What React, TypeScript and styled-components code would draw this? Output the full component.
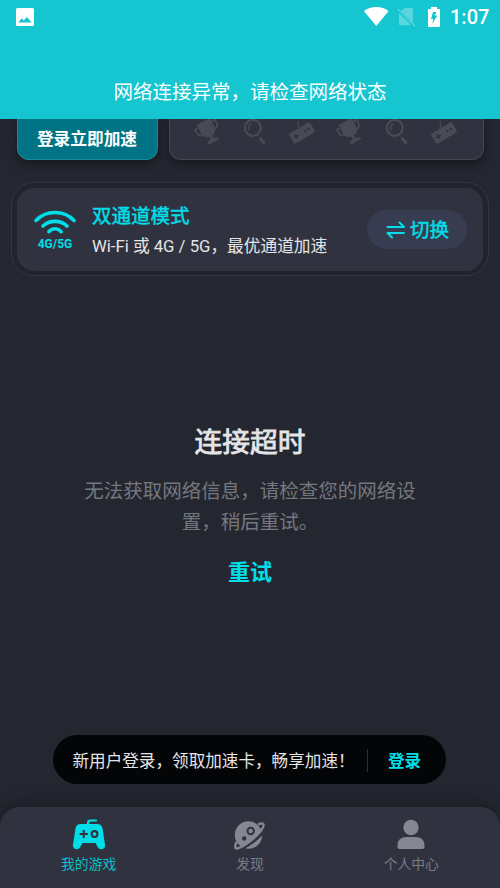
import React from "react";
import styled, { createGlobalStyle } from "styled-components";

const Global = createGlobalStyle`
  * { box-sizing: border-box; }
  body { margin: 0; background: #242730; }
  button { font: inherit; border: 0; padding: 0; background: none; }
`;

const Screen = styled.div`
  width: 500px;
  height: 888px;
  overflow: hidden;
  display: flex;
  flex-direction: column;
  background: #242730;
  color: #e5e5e7;
  font-family: Roboto, "Noto Sans CJK SC", sans-serif;
  white-space: nowrap;
`;

const Banner = styled.header`
  height: 119px;
  flex: none;
  display: flex;
  flex-direction: column;
  background: #15c5cf;
  color: #fff;
  z-index: 1;
`;

const StatusBar = styled.div`
  height: 34px;
  padding: 0 11px 0 16px;
  display: flex;
  align-items: center;
  justify-content: space-between;
`;

const StatusIcons = styled.div`
  display: flex;
  align-items: center;
`;

const Clock = styled.span`
  width: 39px;
  font-size: 20px;
  line-height: 34px;
  font-weight: 500;
`;

const BannerText = styled.div`
  margin-top: 44px;
  font-size: 19.5px;
  line-height: 30px;
  text-align: center;
`;

const TopRow = styled.div`
  height: 41px;
  flex: none;
  display: flex;
  gap: 11px;
  padding: 0 16.5px;
`;

const LoginTile = styled.button`
  width: 141px;
  border: 1px solid #208895;
  border-top: 0;
  border-radius: 0 0 12px 12px;
  background: #007484;
  box-shadow: 0 4px 8px #171820;
  color: #fff;
  font-size: 16.7px;
  line-height: 39px;
  font-weight: 700;
`;

const IconTile = styled.div`
  flex: 1;
  display: flex;
  padding-left: 23.5px;
  gap: 17.2px;
  border: 1px solid #454753;
  border-top: 0;
  border-radius: 0 0 12px 12px;
  background: #30333f;
  box-shadow: 0 4px 8px #171820;
  color: #484a56;

  svg { flex: none; }
`;

const ModeFrame = styled.section`
  flex: none;
  margin: 22px 11px 0;
  height: 94px;
  padding: 5px 4px;
  border: 1.5px solid #343640;
  border-radius: 23px;
  background: #22232d;
`;

const ModeCard = styled.div`
  height: 83px;
  margin: 0 1px;
  padding: 0 16px 0 17px;
  display: flex;
  align-items: center;
  border-radius: 17px;
  background: #30333f;
`;

const Signal = styled.div`
  width: 42px;
  padding-top: 2px;
  display: flex;
  flex-direction: column;
  align-items: center;
  color: #00dfe9;
`;

const SignalLabel = styled.span`
  margin-top: 2px;
  font-size: 12px;
  line-height: 14px;
  font-weight: 700;
`;

const ModeText = styled.div`
  flex: 1;
  padding: 5px 0 0 16px;
`;

const ModeTitle = styled.div`
  color: #00dfe9;
  font-size: 19.5px;
  line-height: 30px;
  -webkit-text-stroke: 0.45px currentColor;
`;

const ModeDetail = styled.div`
  font-size: 16.7px;
  line-height: 30px;
`;

const SwitchButton = styled.button`
  width: 100px;
  height: 39px;
  display: flex;
  align-items: center;
  justify-content: center;
  gap: 5px;
  padding-left: 1px;
  border-radius: 20px;
  background: #383c50;
  color: #00dfe9;
  font-size: 19.5px;
  -webkit-text-stroke: 0.45px currentColor;

  span { margin-top: -2px; }
`;

const ErrorPanel = styled.main`
  flex: 1;
  padding-top: 146px;
  display: flex;
  flex-direction: column;
  align-items: center;
`;

const ErrorTitle = styled.h1`
  margin: 0;
  font-size: 27.7px;
  line-height: 42px;
  font-weight: 400;
  -webkit-text-stroke: 0.8px currentColor;
`;

const ErrorDetail = styled.p`
  width: 334px;
  margin: 12px 0 0;
  color: #76777e;
  font-size: 19.5px;
  line-height: 31px;
  text-align: center;
  white-space: normal;
`;

const Retry = styled.button`
  margin-top: 18px;
  color: #00dfe9;
  font-size: 22px;
  line-height: 34px;
  font-weight: 700;
`;

const LoginPrompt = styled.aside`
  flex: none;
  width: 393px;
  height: 49px;
  margin: 0 0 23px 53px;
  padding: 1px 0 0 19.5px;
  display: flex;
  align-items: center;
  border-radius: 25px;
  background: #040507;
  font-size: 16.6px;
`;

const PromptText = styled.span`
  width: 294.5px;
`;

const PromptLogin = styled.button`
  padding: 2px 0 0 20px;
  border-left: 1px solid #303136;
  color: #00dfe9;
  line-height: 21px;
  font-weight: 700;
`;

const Tabs = styled.nav`
  flex: none;
  height: 81px;
  display: grid;
  grid-template-columns: repeat(3, 1fr);
  padding: 0 8px;
  border-top: 1px solid #343743;
  border-radius: 20px 20px 0 0;
  background: #30333f;
  box-shadow: 0 -3px 13px #1b1c24;
`;

const Tab = styled.button<{ $active?: boolean }>`
  display: flex;
  flex-direction: column;
  align-items: center;
  padding-top: 10px;
  color: ${({ $active }) => ($active ? "#00dfe9" : "#858891")};
  font-size: 13.8px;
  line-height: 20px;
`;

const TabLabel = styled.span<{ $active?: boolean }>`
  margin-top: 4px;
  color: ${({ $active }) => ($active ? "#08bfca" : "#7a7c86")};
`;

const Trophy = () => (
  <svg width="30" height="30" viewBox="0 0 30 30">
    <g transform="translate(-.3 0) rotate(-27 14.5 10)" fill="none" stroke="currentColor">
      <path d="M7.5 2h14v8c0 5-3 7.5-7 7.5s-7-2.500-7-7.500Z" fill="currentColor" strokeLinejoin="round" />
      <path d="M7 5H3.400v2.500c0 4 2 6 5 6M22 5h3.600v2.500c0 4-2 6-5 6" strokeWidth="1.7" />
      <path d="M14.500 17v5" strokeWidth="3" />
      <path d="M8.500 24c1-3.600 11-3.600 12 0Z" fill="currentColor" strokeLinejoin="round" />
    </g>
  </svg>
);

const Magnifier = () => (
  <svg width="30" height="30" viewBox="0 0 30 30" fill="none" stroke="currentColor" strokeLinecap="round">
    <circle cx="12.8" cy="8.8" r="8" strokeWidth="2.2" />
    <path d="M8.9 10.8a5 5 0 0 1 2-5.8" strokeWidth="1.5" />
    <path d="m20.3 19.5 3.6 4.2" strokeWidth="3" />
  </svg>
);

const Gamepad = () => (
  <svg width="30" height="30" viewBox="0 0 30 30">
    <g transform="rotate(-31 15 14)">
      <rect x="2.8" y="8.2" width="24.4" height="11.6" rx="1.5" fill="currentColor" />
      <path d="M5.6 14h5.4M8.3 11.3v5.4" stroke="#30333f" strokeWidth="1.6" />
      <circle cx="19" cy="14" r="1.2" fill="#30333f" />
      <circle cx="22.8" cy="14" r="1.2" fill="#30333f" />
    </g>
    <path d="M11.8 9V7c-.2-1.8-1.3-2.6-.6-5" fill="none" stroke="currentColor" strokeWidth="1.4" />
  </svg>
);

export default function App() {
  return (
    <Screen>
      <Global />
      <Banner>
        <StatusBar>
          <svg width="18" height="18" viewBox="0 0 18 18">
            <rect width="18" height="18" rx="1.5" fill="#fff" />
            <path d="m2.3 14.6 3.4-4.3 2 2.3 3.3-3.7 4.6 5.7Z" fill="#15c5cf" />
          </svg>
          <StatusIcons>
            <svg width="86" height="22" viewBox="0 0 86 22">
              <path d="M0 5.2C6.5-.4 18-.4 24.5 5.2L12.3 20Z" fill="#fff" />
              <path d="M40.5 2H48q1 0 1 1v13.5L37.3 5ZM35 7v11q0 1.2 1.2 1.2h11Z" fill="#5ad6dd" />
              <path d="m34 3 17 17" stroke="#5ad6dd" strokeWidth="1.5" />
              <path d="M64 3h3V1h6v2h3v18H64Z" fill="#fff" />
              <path d="m69 6-2 7h2.3l-1 5 5-8.5h-2.6l1.8-3.5Z" fill="#15c5cf" />
            </svg>
            <Clock>1:07</Clock>
          </StatusIcons>
        </StatusBar>
        <BannerText>网络连接异常，请检查网络状态</BannerText>
      </Banner>
      <TopRow>
        <LoginTile>登录立即加速</LoginTile>
        <IconTile>
          <Trophy /><Magnifier /><Gamepad />
          <Trophy /><Magnifier /><Gamepad />
        </IconTile>
      </TopRow>
      <ModeFrame>
        <ModeCard>
          <Signal>
            <svg width="42" height="25" viewBox="0 0 42 25" fill="none" stroke="currentColor" strokeWidth="3.6" strokeLinecap="round">
              <path d="M2 10.5C12-.2 30-.2 40 10.5M9 16c6.5-6.2 17.5-6.2 24 0M15 21.7c3-4 9-4 12 0" />
            </svg>
            <SignalLabel>4G/5G</SignalLabel>
          </Signal>
          <ModeText>
            <ModeTitle>双通道模式</ModeTitle>
            <ModeDetail>Wi-Fi 或 4G / 5G，最优通道加速</ModeDetail>
          </ModeText>
          <SwitchButton>
            <svg width="19" height="18" viewBox="0 0 19 18" fill="none" stroke="currentColor" strokeWidth="2" strokeLinecap="round" strokeLinejoin="round">
              <path d="M1.5 6H18l-4.5-4.5M18 12H1.5L6 16.5" />
            </svg>
            <span>切换</span>
          </SwitchButton>
        </ModeCard>
      </ModeFrame>
      <ErrorPanel>
        <ErrorTitle>连接超时</ErrorTitle>
        <ErrorDetail>无法获取网络信息，请检查您的网络设置，稍后重试。</ErrorDetail>
        <Retry>重试</Retry>
      </ErrorPanel>
      <LoginPrompt>
        <PromptText>新用户登录，领取加速卡，畅享加速！</PromptText>
        <PromptLogin>登录</PromptLogin>
      </LoginPrompt>
      <Tabs>
        <Tab $active>
          <svg width="34" height="32" viewBox="0 0 34 32">
            <path d="M16 7V5q0-2.5 2.5-2.5H24" fill="none" stroke="currentColor" strokeWidth="2.2" strokeLinecap="round" />
            <path d="M9 6h16q5 0 5.6 5L33 26.5c.8 5-5 6-7 3L23.5 25h-13L8 29.5c-2 3-8 2-7-3L3.4 11Q4 6 9 6Z" fill="currentColor" />
            <path d="M8.5 16H15M11.75 12.75v6.5" stroke="#30333f" strokeWidth="2.2" strokeLinecap="round" />
            <circle cx="22.5" cy="16" r="2.9" fill="none" stroke="#30333f" strokeWidth="2.1" />
          </svg>
          <TabLabel $active>我的游戏</TabLabel>
        </Tab>
        <Tab>
          <svg width="34" height="32" viewBox="0 0 34 32">
            <circle cx="15.5" cy="17" r="13.7" fill="currentColor" />
            <path d="M33 9.5C28 19 16 28 4 32.500" fill="none" stroke="#30333f" strokeWidth="3" />
            <path d="M25 6.5C31 4 32.5 6.5 28 12.5C21 21.5 9 29.5 4 30.5C1.5 31 2 27.5 3.5 24" fill="none" stroke="currentColor" strokeWidth="2.4" strokeLinejoin="round" />
            <path d="m26 8 2.800-.5-1.600 3Z M4.500 25.500l2.500 2-3 1.300Z" fill="#30333f" />
            <circle cx="17.7" cy="13" r="3.2" fill="none" stroke="#30333f" strokeWidth="2" />
            <circle cx="11.2" cy="20.5" r="2.2" fill="#30333f" />
          </svg>
          <TabLabel>发现</TabLabel>
        </Tab>
        <Tab>
          <svg width="34" height="32" viewBox="0 0 34 32" fill="currentColor">
            <circle cx="17" cy="9.5" r="7.7" />
            <path d="M3.5 29v-1.5q0-8.5 9-8.5h9q9 0 9 8.5V29q0 2-2 2h-23q-2 0-2-2Z" />
          </svg>
          <TabLabel>个人中心</TabLabel>
        </Tab>
      </Tabs>
    </Screen>
  );
}
